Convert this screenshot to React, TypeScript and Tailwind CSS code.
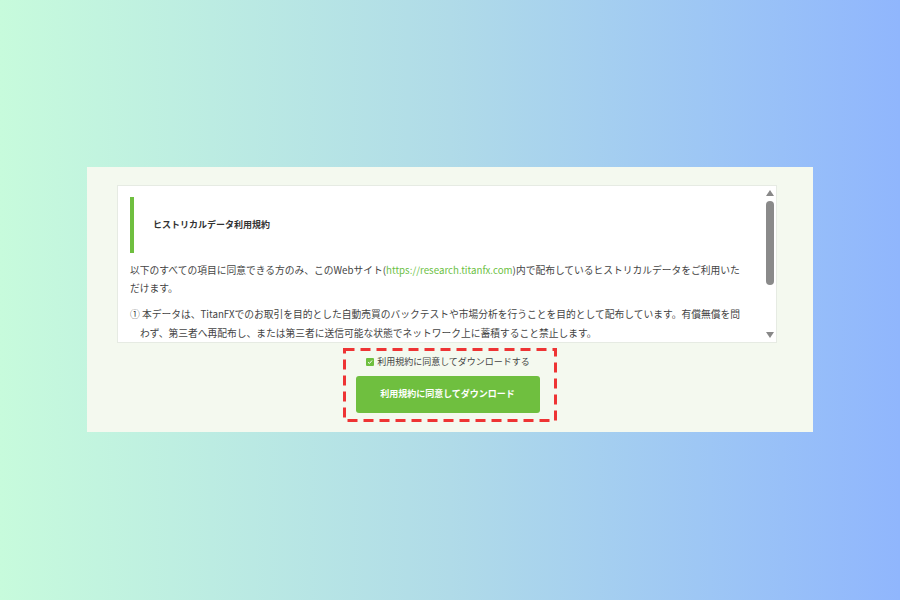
import React from 'react';

const font = { fontFamily: '"Noto Sans CJK JP", "Noto Sans", sans-serif' };

export default function App() {
  return (
    <div
      className="w-[900px] h-[600px] flex items-center justify-center bg-gradient-to-r from-[#c7fbdc] via-[#b0dbe8] to-[#90b6fd]"
      style={font}
    >
      <div className="w-[726px] h-[265px] mt-[-1px] bg-[#f4f9ef] flex flex-col items-center pt-[18px]">
        <div className="w-[660px] h-[158px] mr-[6px] bg-white border border-[#e6ebe3] flex">
          <div className="flex-1 pl-[12px] pt-[11px] pr-[18px] overflow-hidden">
            <div className="h-[56px] border-l-[4px] border-[#6fbf3f] flex items-center pl-[19px]">
              <span className="text-[9px] font-bold text-[#333]">ヒストリカルデータ利用規約</span>
            </div>
            <p className="mt-[8px] text-[9.75px] leading-[18px] text-[#444]">
              以下のすべての項目に同意できる方のみ、このWebサイト(<span className="text-[#6dbf45]">https://research.titanfx.com</span>)内で配布しているヒストリカルデータをご利用いただけます。
            </p>
            <p className="mt-[8px] text-[9.75px] leading-[19px] text-[#444] pl-[10px] -indent-[10px]">
              ① 本データは、TitanFXでのお取引を目的とした自動売買のバックテストや市場分析を行うことを目的として配布しています。有償無償を問わず、第三者へ再配布し、または第三者に送信可能な状態でネットワーク上に蓄積すること禁止します。
            </p>
          </div>
          <div className="w-[13px] flex flex-col items-center py-[4px]">
            <div className="w-0 h-0 border-l-[4px] border-r-[4px] border-b-[6px] border-l-transparent border-r-transparent border-b-[#888]" />
            <div className="w-[8px] h-[84px] mt-[5px] rounded-full bg-[#8a8a8a]" />
            <div className="flex-1" />
            <div className="w-0 h-0 border-l-[4px] border-r-[4px] border-t-[6px] border-l-transparent border-r-transparent border-t-[#888]" />
          </div>
        </div>
        <div className="relative mt-[5px] w-[214px] h-[74px] flex flex-col items-center pt-[7px]">
          <svg className="absolute inset-0 pointer-events-none" width="214" height="74">
            <rect x="1.5" y="1.5" width="211" height="71" fill="none" stroke="#ee3434" strokeWidth="3" strokeDasharray="10 6" />
          </svg>
          <label className="flex items-center gap-[3px] text-[9px] text-[#444] mr-[4px]">
            <span className="w-[8px] h-[8px] bg-[#6fbf3f] rounded-[1px] flex items-center justify-center">
              <svg width="6" height="6" viewBox="0 0 6 6">
                <path d="M1 3.2 L2.4 4.5 L5 1.5" stroke="white" strokeWidth="1" fill="none" />
              </svg>
            </span>
            利用規約に同意してダウンロードする
          </label>
          <button className="mt-[7px] mr-[5px] w-[184px] h-[37px] rounded-[3px] bg-[#6fbf3f] text-white text-[9px] font-bold">
            利用規約に同意してダウンロード
          </button>
        </div>
      </div>
    </div>
  );
}
